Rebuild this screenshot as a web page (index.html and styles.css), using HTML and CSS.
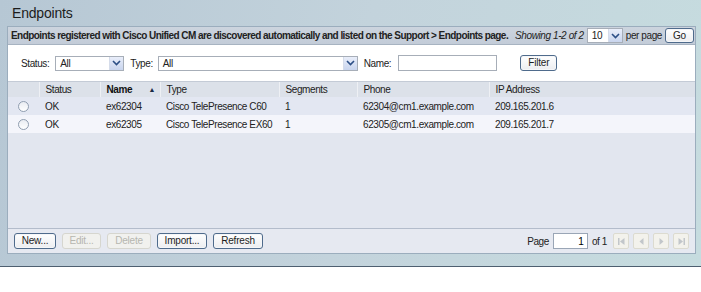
FILE: index.html
```html
<!DOCTYPE html>
<html lang="en">
<head>
  <meta charset="UTF-8" />
  <title>Endpoints</title>
  <link rel="stylesheet" href="styles.css">
</head>
<body>
  <div class="page">
    <h1 class="title">Endpoints</h1>

    <div class="panel">
      <div class="panel-head">
        <span class="intro">Endpoints registered with Cisco Unified CM are discovered automatically and listed on the Support &gt; Endpoints page.</span>
        <span class="showing">Showing 1-2 of 2</span>
        <span class="select small"><span class="select-val">10</span><span class="select-btn"><svg width="9" height="6" viewBox="0 0 9 6"><path d="M1 1 L4.5 4.5 L8 1" fill="none" stroke="#2c4f86" stroke-width="1.6"/></svg></span></span>
        <span class="perpage">per page</span>
        <button class="btn go">Go</button>
      </div>

      <div class="filters">
        <label>Status:</label>
        <span class="select status"><span class="select-val">All</span><span class="select-btn"><svg width="9" height="6" viewBox="0 0 9 6"><path d="M1 1 L4.5 4.5 L8 1" fill="none" stroke="#2c4f86" stroke-width="1.6"/></svg></span></span>
        <label class="type-label">Type:</label>
        <span class="select type"><span class="select-val">All</span><span class="select-btn"><svg width="9" height="6" viewBox="0 0 9 6"><path d="M1 1 L4.5 4.5 L8 1" fill="none" stroke="#2c4f86" stroke-width="1.6"/></svg></span></span>
        <label class="name-label">Name:</label>
        <input class="text name" type="text">
        <button class="btn filter">Filter</button>
      </div>

      <table class="grid">
        <colgroup>
          <col class="c-radio"><col class="c-status"><col class="c-name"><col class="c-type"><col class="c-seg"><col class="c-phone"><col>
        </colgroup>
        <thead>
          <tr>
            <th></th>
            <th>Status</th>
            <th class="sorted">Name <span class="arrow">&#9650;</span></th>
            <th>Type</th>
            <th>Segments</th>
            <th>Phone</th>
            <th>IP Address</th>
          </tr>
        </thead>
        <tbody>
          <tr class="odd">
            <td><span class="radio"></span></td>
            <td>OK</td>
            <td>ex62304</td>
            <td>Cisco TelePresence C60</td>
            <td>1</td>
            <td>62304@cm1.example.com</td>
            <td>209.165.201.6</td>
          </tr>
          <tr class="even">
            <td><span class="radio"></span></td>
            <td>OK</td>
            <td>ex62305</td>
            <td>Cisco TelePresence EX60</td>
            <td>1</td>
            <td>62305@cm1.example.com</td>
            <td>209.165.201.7</td>
          </tr>
        </tbody>
      </table>
      <div class="empty"></div>

      <div class="footer">
        <div class="actions">
          <button class="btn">New...</button>
          <button class="btn" disabled>Edit...</button>
          <button class="btn" disabled>Delete</button>
          <button class="btn">Import...</button>
          <button class="btn">Refresh</button>
        </div>
        <div class="pager">
          <span>Page</span>
          <input class="text page-num" type="text" value="1">
          <span class="of">of 1</span>
          <button class="nav" disabled><svg width="9" height="7" viewBox="0 0 9 7"><rect x="1" y="0" width="1.5" height="7"/><path d="M7.5 0 L3 3.5 L7.5 7 Z"/></svg></button>
          <button class="nav" disabled><svg width="9" height="7" viewBox="0 0 9 7"><path d="M6.5 0 L2.5 3.5 L6.5 7 Z"/></svg></button>
          <button class="nav" disabled><svg width="9" height="7" viewBox="0 0 9 7"><path d="M2.5 0 L6.5 3.5 L2.5 7 Z"/></svg></button>
          <button class="nav" disabled><svg width="9" height="7" viewBox="0 0 9 7"><path d="M1.5 0 L6 3.5 L1.5 7 Z"/><rect x="6.5" y="0" width="1.5" height="7"/></svg></button>
        </div>
      </div>
    </div>
  </div>
</body>
</html>
```

FILE: styles.css
```css
html, body {
  margin: 0;
  padding: 0;
  background: #fff;
}
body {
  font-family: "Liberation Sans", Arial, sans-serif;
  font-size: 10px;
  letter-spacing: -0.4px;
  color: #222;
}
.page {
  height: 267px;
  border-bottom: 1px solid #4e5f70;
  background: linear-gradient(100deg, #b6c7d4 0%, #c3d3dc 50%, #c6dcdf 100%);
  padding-top: 4px;
  box-sizing: border-box;
}
.title {
  margin: 0 0 4px 12px;
  font-size: 14px;
  letter-spacing: -0.2px;
  font-weight: normal;
  line-height: 18px;
  color: #1c1c1c;
}
.panel {
  margin: 0 5px 0 7px;
  border: 1px solid #9badbd;
  background: #e2e6ef;
}

/* header bar */
.panel-head {
  display: flex;
  align-items: center;
  height: 17px;
  padding: 0 1px 0 3px;
  background: linear-gradient(#ccd4de, #c3ccd8);
  border-bottom: 1px solid #a7b3c1;
  white-space: nowrap;
}
.intro {
  font-weight: bold;
  letter-spacing: -0.55px;
  flex: 1;
}
.showing {
  font-style: italic;
  margin-right: 3px;
}
.perpage {
  margin: 0 3px;
}

/* select boxes */
.select {
  display: inline-flex;
  align-items: stretch;
  height: 15px;
  box-sizing: border-box;
  border: 1px solid #a7aeb8;
  background: #fff;
}
.select-val {
  flex: 1;
  padding: 0 4px;
  line-height: 13px;
}
.select-btn {
  width: 13px;
  display: flex;
  align-items: center;
  justify-content: center;
  background: linear-gradient(#e9eefa, #c9d5ee);
  border-left: 1px solid #d5dcea;
}
.select.small { width: 36px; }
.select.status { width: 69px; }
.select.type { width: 200px; }

/* buttons */
.btn {
  font-family: inherit;
  font-size: 10px;
  letter-spacing: -0.2px;
  color: #1d1d1d;
  height: 16px;
  padding: 0 4px;
  line-height: 12px;
  border: 1px solid #4f6b8c;
  border-radius: 3px;
  background: linear-gradient(#ffffff, #ecedf0);
  box-shadow: inset 0 0 0 1px #f5f6f8;
}
.btn:disabled {
  color: #b6b6b0;
  border-color: #d6d6cf;
  background: #f1f1ee;
  box-shadow: none;
}
.go {
  width: 29px;
  height: 15px;
}

/* filter row */
.filters {
  display: flex;
  align-items: center;
  height: 36px;
  padding: 0 0 0 13px;
  background: #fff;
  border-bottom: 1px solid #c4cbd6;
}
.filters label {
  margin-right: 6px;
}
.type-label { margin-left: 6px; }
.filters .type-label { margin-right: 5px; }
.name-label { margin-left: 6px; }
.filters .name-label { margin-right: 7px; }
.text {
  font-family: inherit;
  font-size: 10px;
  height: 16px;
  box-sizing: border-box;
  border: 1px solid #a7aeb8;
  padding: 0 3px;
  outline: none;
}
.name { width: 99px; }
.filter {
  margin-left: 23px;
  width: 37px;
}

/* grid */
.grid {
  width: 100%;
  border-collapse: collapse;
  table-layout: fixed;
}
.c-radio { width: 31px; }
.c-status { width: 61px; }
.c-name { width: 60px; }
.c-type { width: 119px; }
.c-seg { width: 78px; }
.c-phone { width: 132px; }
.grid th {
  height: 15px;
  padding: 0 0 0 6px;
  text-align: left;
  font-weight: normal;
  background: #dce1e9;
  border-left: 1px solid #eef0f4;
  white-space: nowrap;
}
.grid th:first-child { border-left: none; }
.grid th.sorted {
  font-weight: bold;
  color: #111;
}
.arrow {
  font-size: 7px;
  margin-left: 14px;
  vertical-align: 1px;
  color: #1a2a45;
}
.grid td {
  height: 18px;
  padding: 0 0 0 6px;
  white-space: nowrap;
}
.grid tr.odd td { background: #e3e7f2; }
.grid tr.even td { background: #f4f5fb; }
.grid td:first-child {
  padding: 0 0 0 10px;
}
.radio {
  display: block;
  width: 11px;
  height: 11px;
  box-sizing: border-box;
  border: 1px solid #8f9db0;
  border-radius: 50%;
  background: linear-gradient(#e9ecf2, #ffffff);
}
.empty {
  height: 95px;
  border-bottom: 1px solid #b3bccb;
}

/* footer */
.footer {
  display: flex;
  justify-content: space-between;
  align-items: center;
  height: 24px;
  padding: 0 6px 0 6px;
  background: #e6e9f1;
}
.actions {
  display: flex;
  gap: 6px;
}
.actions .btn:nth-child(1) { width: 42px; }
.actions .btn:nth-child(2) { width: 39px; }
.actions .btn:nth-child(3) { width: 44px; }
.actions .btn:nth-child(4) { width: 50px; }
.actions .btn:nth-child(5) { width: 50px; }
.pager {
  display: flex;
  align-items: center;
}
.page-num {
  width: 35px;
  text-align: right;
  margin: 0 4px 0 4px;
  border-color: #9aa6b6;
}
.of {
  margin-right: 2px;
}
.nav {
  width: 16px;
  height: 16px;
  padding: 0;
  margin-left: 4px;
  display: flex;
  align-items: center;
  justify-content: center;
  border: 1px solid #dcdbd0;
  border-radius: 2px;
  background: #f3f2ec;
  fill: #c2c6ca;
}
```
